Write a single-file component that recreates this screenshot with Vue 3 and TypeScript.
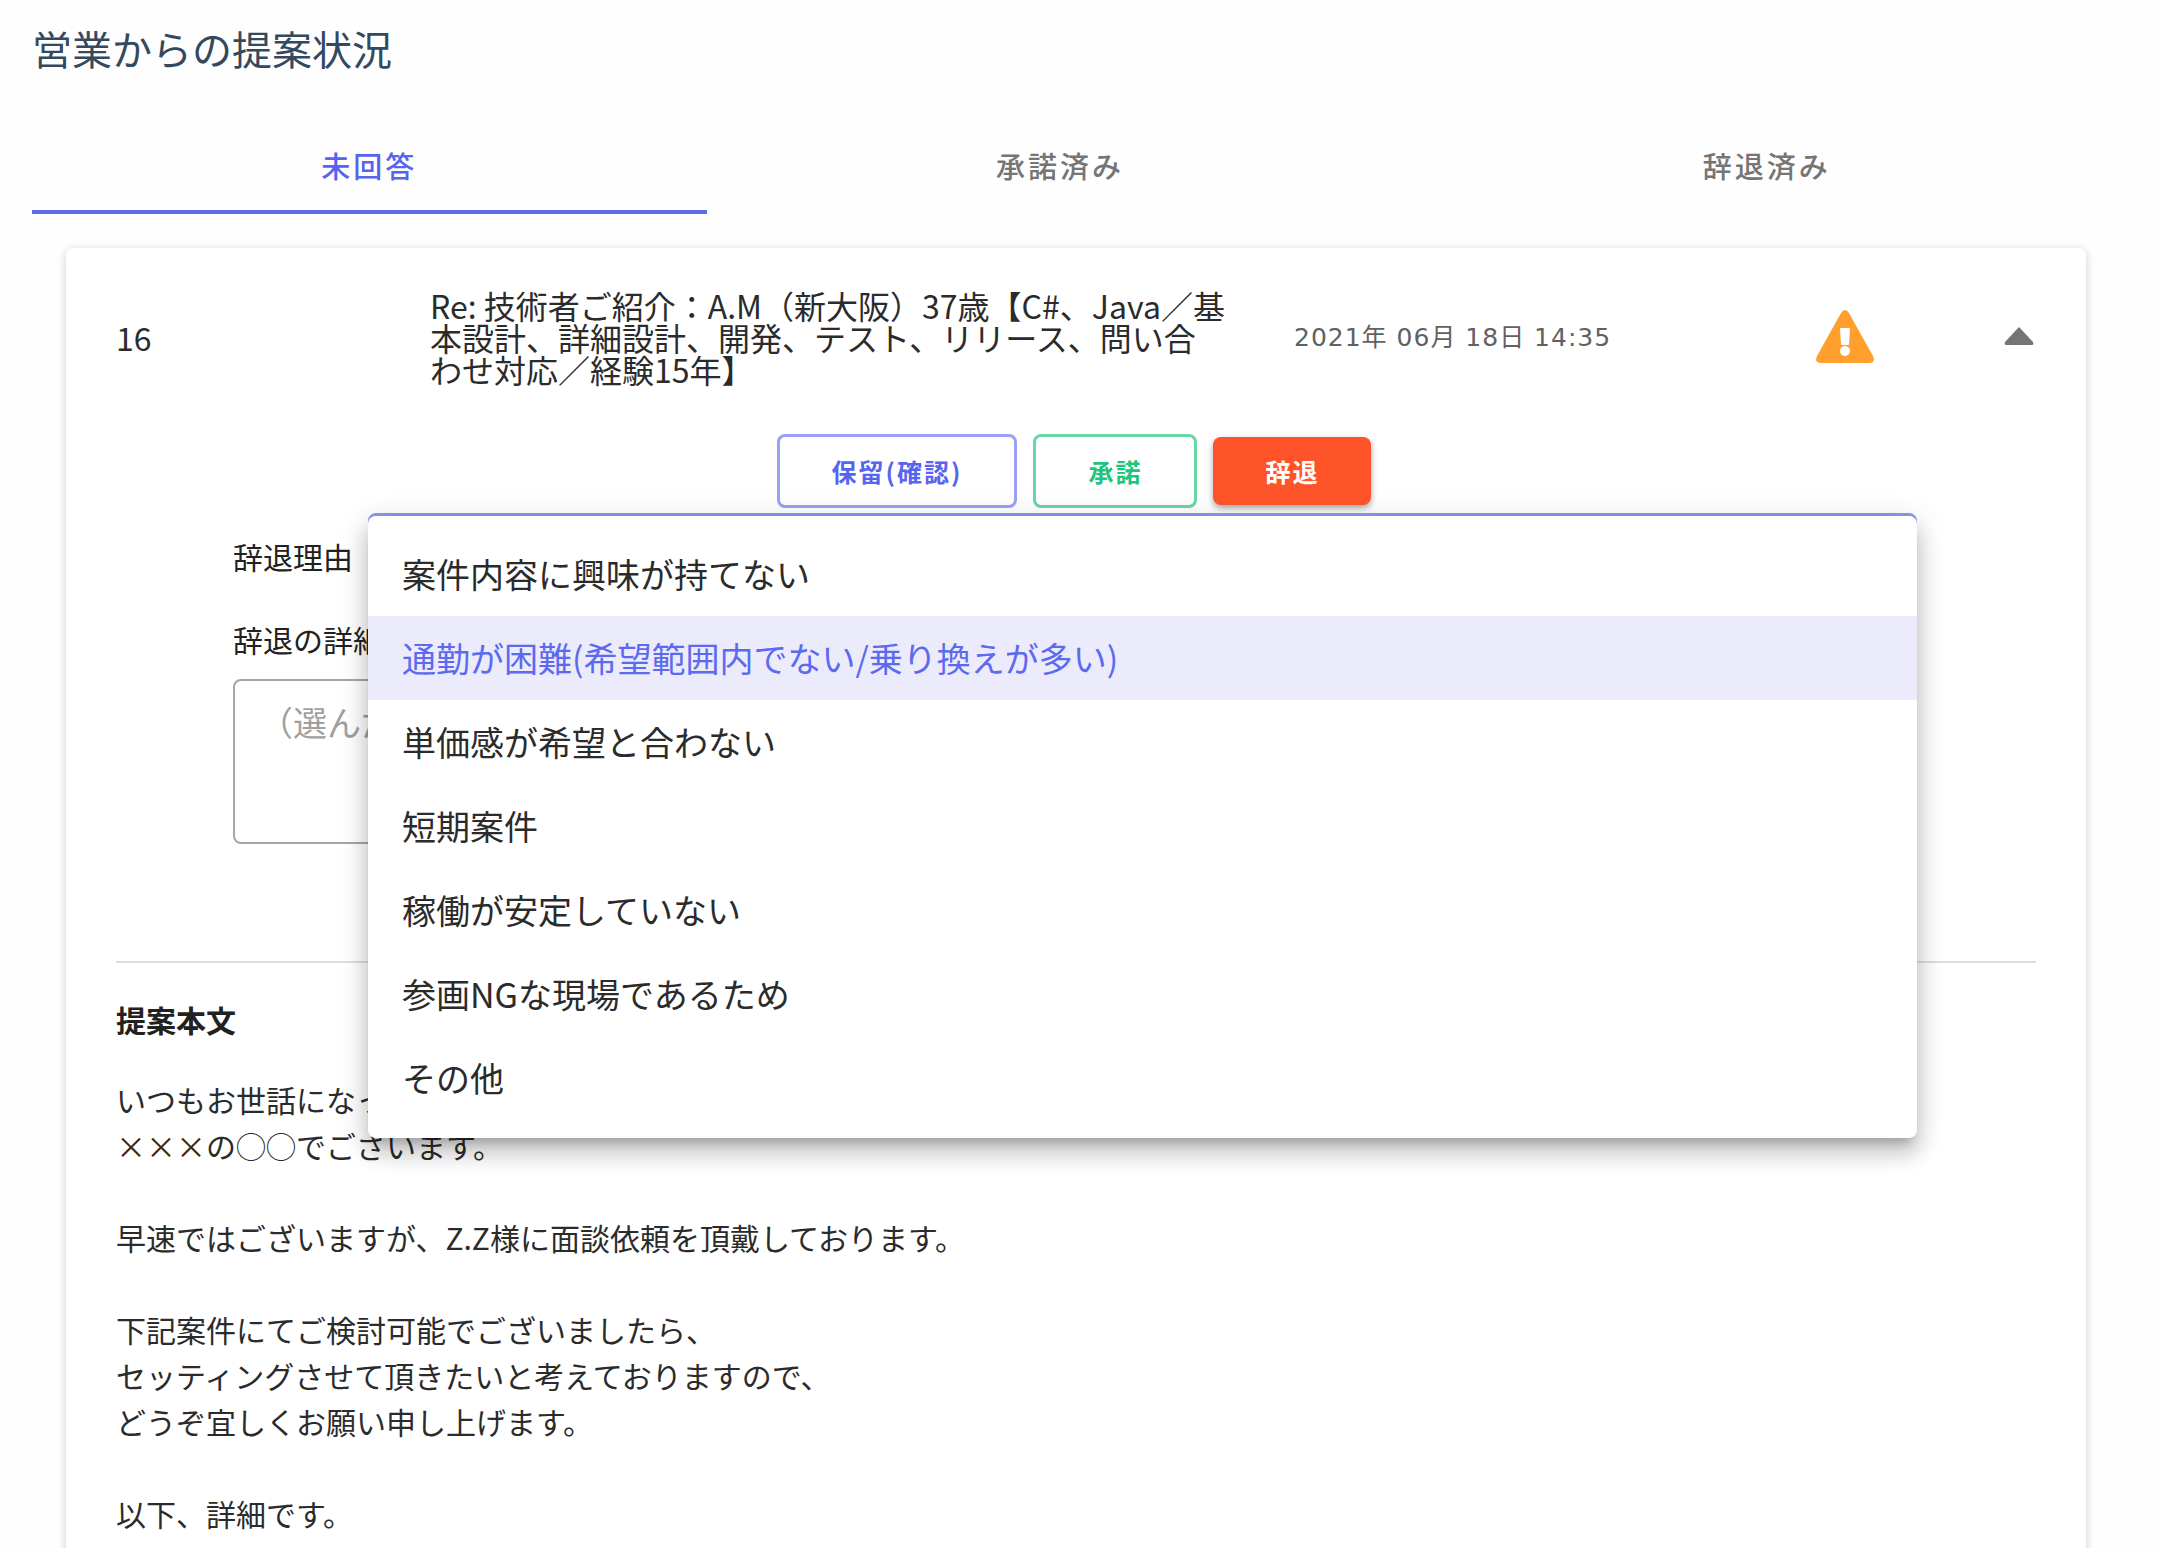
<script setup lang="ts">
import { ref } from 'vue'

const tabs: string[] = ['未回答', '承諾済み', '辞退済み']
const activeTab = ref(0)

const reasons: string[] = [
  '案件内容に興味が持てない',
  '通勤が困難(希望範囲内でない/乗り換えが多い)',
  '単価感が希望と合わない',
  '短期案件',
  '稼働が安定していない',
  '参画NGな現場であるため',
  'その他',
]
const selectedReason = ref(1)
const detail = ref('')

const body = `いつもお世話になっ
×××の◯◯でございます。

早速ではございますが、Z.Z様に面談依頼を頂戴しております。

下記案件にてご検討可能でございましたら、
セッティングさせて頂きたいと考えておりますので、
どうぞ宜しくお願い申し上げます。

以下、詳細です。`
</script>

<template>
  <main class="page">
    <h1 class="title">営業からの提案状況</h1>

    <div class="tabs" role="tablist">
      <button
        v-for="(tab, i) in tabs"
        :key="tab"
        type="button"
        role="tab"
        class="tab"
        :class="{ active: i === activeTab }"
        :aria-selected="i === activeTab"
        @click="activeTab = i"
      >{{ tab }}</button>
    </div>

    <section class="card">
      <header class="summary">
        <span class="count">16</span>
        <h2 class="subject">Re: 技術者ご紹介：A.M（新大阪）37歳【C#、Java／基<br />本設計、詳細設計、開発、テスト、リリース、問い合<br />わせ対応／経験15年】</h2>
        <time class="date" datetime="2021-06-18T14:35">2021年 06月 18日 14:35</time>
        <svg class="warning" viewBox="0 0 58 54" role="img" aria-label="警告">
          <path fill="#ff9f2e" d="M25 3Q29-3 33 3L57 46Q60 53 53 53H5Q-2 53 1 46Z" />
          <path fill="#fff" d="M24 19Q24 18 25 18H33Q34 18 34 19L33 34Q33 35 32 35H26Q25 35 25 34Z" />
          <circle cx="29" cy="41" r="5" fill="#fff" />
        </svg>
        <button type="button" class="toggle" aria-label="閉じる">
          <svg viewBox="0 0 30 18" aria-hidden="true">
            <path fill="#757575" d="M15 0L29 15Q30 18 28 18H2Q0 18 1 15Z" />
          </svg>
        </button>
      </header>

      <div class="actions">
        <button type="button" class="btn hold">保留(確認)</button>
        <button type="button" class="btn accept">承諾</button>
        <button type="button" class="btn decline">辞退</button>
      </div>

      <form class="form" @submit.prevent>
        <div class="reason-row">
          <span id="reason-label" class="label">辞退理由</span>
          <div class="field">
            <ul class="menu" role="listbox" aria-labelledby="reason-label">
              <li
                v-for="(reason, i) in reasons"
                :key="reason"
                role="option"
                class="option"
                :class="{ selected: i === selectedReason }"
                :aria-selected="i === selectedReason"
                @click="selectedReason = i"
              >{{ reason }}</li>
            </ul>
          </div>
        </div>
        <label class="label detail-label" for="detail">辞退の詳細</label>
        <textarea id="detail" v-model="detail" class="detail" placeholder="（選んだ"></textarea>
      </form>

      <hr class="divider" />

      <h3 class="body-title">提案本文</h3>
      <p class="body">{{ body }}</p>
    </section>
  </main>
</template>

<style>
body {
  margin: 0;
  background: #fefefe;
}
</style>

<style scoped>
* {
  box-sizing: border-box;
}

.page {
  height: 100vh;
  overflow: hidden;
  padding: 18px 40px 0 32px;
  color: #2b2b2b;
  font-family: "Noto Sans CJK JP", sans-serif;
  font-size: 30px;
}

button,
textarea {
  margin: 0;
  font-family: inherit;
}

button {
  padding: 0;
  border: 0;
  background: none;
  cursor: pointer;
}

.title {
  margin: 0;
  color: #34495e;
  font-size: 40px;
  font-weight: 400;
  line-height: 60px;
}

.tabs {
  display: flex;
  margin-top: 40px;
}

.tab {
  flex: 1 1 auto;
  height: 96px;
  padding-bottom: 2px;
  border-bottom: 4px solid transparent;
  border-top: 4px solid transparent;
  color: #757575;
  font-size: 29px;
  font-weight: 500;
  letter-spacing: 3px;
}

.tab.active {
  border-bottom-color: #5f6ee8;
  color: #5664ef;
}

.card {
  margin: 34px 34px 0;
  padding: 0 50px 60px;
  border-radius: 8px;
  background: #fff;
  box-shadow: 0 2px 10px rgba(0, 0, 0, 0.2);
}

.summary {
  display: grid;
  grid-template-columns: 314fr 864fr 522fr 188fr 32px;
  align-items: center;
  height: 177px;
}

.count {
  font-size: 32px;
}

.subject {
  margin: 0;
  padding-right: 60px;
  font-size: 32px;
  font-weight: 400;
  line-height: 32px;
}

.date {
  padding-bottom: 4px;
  color: #616161;
  font-family: "DejaVu Sans", "Noto Sans CJK JP", sans-serif;
  font-size: 25px;
  letter-spacing: 1px;
}

.warning {
  width: 58px;
  height: 54px;
}

.toggle {
  padding-bottom: 2px;
}

.toggle svg {
  display: block;
  width: 30px;
  height: 18px;
}

.actions {
  display: flex;
  justify-content: center;
  align-items: center;
  gap: 16px;
  margin-top: 9px;
  padding-right: 4px;
}

.btn {
  height: 74px;
  padding: 0 52px;
  border: 3px solid;
  border-radius: 8px;
  font-size: 25px;
  font-weight: 700;
  letter-spacing: 2px;
}

.hold {
  border-color: #98a1f3;
  color: #5664ef;
}

.accept {
  border-color: #69d6a8;
  color: #1fc47d;
}

.decline {
  height: 68px;
  border: 0;
  background: #ff5429;
  color: #fff;
  box-shadow: 0 3px 6px rgba(0, 0, 0, 0.35);
}

.form {
  padding: 0 119px 0 117px;
}

.reason-row {
  display: flex;
  align-items: flex-start;
  margin-top: 5px;
}

.label {
  color: #212121;
  line-height: 44px;
}

.reason-row .label {
  flex: none;
  width: 135px;
  padding-top: 21px;
}

.field {
  position: relative;
  flex: 1;
  height: 90px;
  border: 3px solid #8e98f0;
  border-radius: 8px;
}

.menu {
  position: absolute;
  z-index: 1;
  top: 0;
  left: -3px;
  right: -3px;
  margin: 0;
  padding: 16px 0 18px;
  border-radius: 8px;
  background: #fff;
  box-shadow:
    0 10px 10px -6px rgba(0, 0, 0, 0.2),
    0 16px 20px 2px rgba(0, 0, 0, 0.14),
    0 6px 28px 4px rgba(0, 0, 0, 0.12);
  list-style: none;
}

.option {
  padding: 0 34px;
  font-size: 34px;
  line-height: 84px;
}

.option.selected {
  background: #ecebfb;
  color: #5b6aee;
}

.detail-label {
  display: block;
  margin-top: 14px;
}

.detail {
  display: block;
  width: 100%;
  height: 165px;
  margin-top: 18px;
  padding: 16px 24px;
  border: 2px solid #a6a6a6;
  border-radius: 8px;
  background: transparent;
  font-size: 34px;
  line-height: 50px;
  resize: none;
}

.detail::placeholder {
  color: #a0a0a0;
  opacity: 1;
}

.divider {
  height: 2px;
  margin: 117px 0 0;
  border: 0;
  background: #dedede;
}

.body-title {
  margin: 33px 0 0;
  color: #212121;
  font-size: 30px;
  font-weight: 700;
  line-height: 46px;
}

.body {
  margin: 34px 0 0;
  line-height: 46px;
  white-space: pre-wrap;
}
</style>
